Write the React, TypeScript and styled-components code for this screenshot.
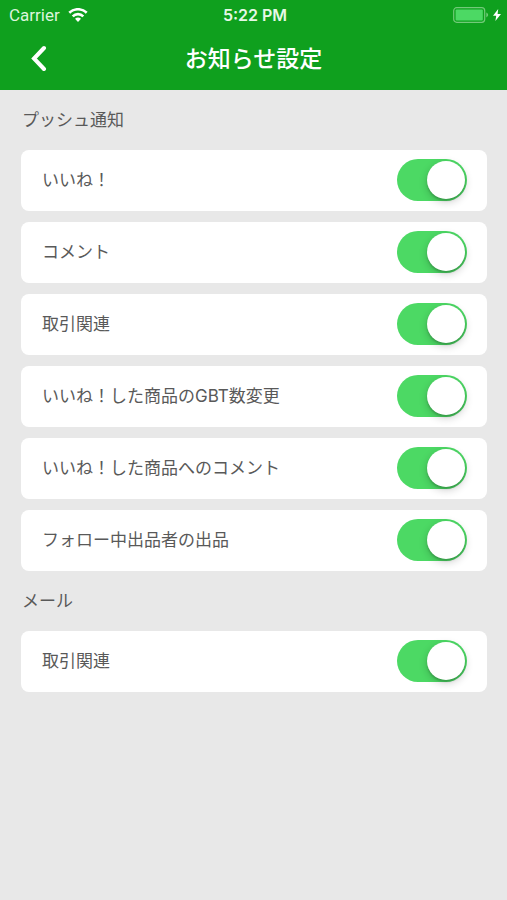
import React, { useState } from "react";
import styled, { createGlobalStyle } from "styled-components";

const GlobalStyle = createGlobalStyle`
  * { box-sizing: border-box; }
  body {
    margin: 0;
    background: #e8e8e8;
    color: #595959;
    font-family: "Inter", "Noto Sans CJK JP", sans-serif;
  }
`;

const Screen = styled.div`
  min-height: 100vh;
  background: #e8e8e8;
`;

const Header = styled.header`
  height: 90px;
  background: #0fa01e;
  color: #fff;
`;

const StatusBar = styled.div`
  display: grid;
  grid-template-columns: 1fr auto 1fr;
  align-items: center;
  height: 30px;
  padding: 0 6px 0 9px;
  font-size: 16px;
  line-height: 30px;
`;

const Carrier = styled.div`
  display: flex;
  align-items: center;
  gap: 8px;
  color: #dcf5dc;
  font-family: "Roboto", sans-serif;
  font-size: 17px;
`;

const Clock = styled.time`
  color: #e6f8e6;
  font-weight: 600;
`;

const Power = styled.div`
  display: flex;
  justify-content: flex-end;
  align-items: center;
  gap: 4px;
`;

const NavBar = styled.div`
  display: grid;
  grid-template-columns: 56px 1fr 56px;
  align-items: center;
  height: 56px;
`;

const BackButton = styled.button`
  display: flex;
  justify-content: flex-end;
  align-items: center;
  height: 44px;
  padding: 0 8px 0 0;
  border: 0;
  background: none;
  color: #fff;
  cursor: pointer;
`;

const Title = styled.h1`
  margin: 0;
  padding-bottom: 2px;
  text-align: center;
  font-family: "Noto Sans CJK JP", sans-serif;
  font-size: 23px;
  line-height: 32px;
  font-weight: 500;
`;

const Main = styled.main`
  padding: 0 20px 20px 21px;
`;

const SectionTitle = styled.h2`
  margin: 0;
  padding: 0 1px;
  font-size: 17px;
  line-height: 60px;
  font-weight: 400;
`;

const List = styled.ul`
  display: grid;
  gap: 11px;
  margin: 0;
  padding: 0;
  list-style: none;
`;

const Row = styled.label`
  display: flex;
  justify-content: space-between;
  align-items: center;
  height: 61px;
  padding: 0 20px 2px 21px;
  border-radius: 8px;
  background: #fff;
  font-size: 17px;
  line-height: 24px;
  cursor: pointer;
`;

const Switch = styled.input`
  appearance: none;
  flex: none;
  display: flex;
  align-items: center;
  width: 70px;
  height: 42px;
  margin: 0;
  padding: 0 2px;
  border-radius: 21px;
  background: #d5d5d5;
  cursor: pointer;

  &::before {
    content: "";
    width: 38px;
    height: 38px;
    border-radius: 50%;
    background: #fff;
    box-shadow: 0 3px 8px rgba(0, 0, 0, 0.2), 0 2px 2px rgba(0, 0, 0, 0.16);
  }

  &:checked {
    justify-content: flex-end;
    background: #4cd964;
  }
`;

const WifiIcon = () => (
  <svg width="20" height="15" viewBox="0 0 20 15" aria-label="Wi-Fi">
    <g fill="none" stroke="#fff" strokeWidth="2.6">
      <path d="M1.3 4.8a12.4 12.4 0 0 1 17.4 0" />
      <path d="M4.7 8.3a7.5 7.5 0 0 1 10.6 0" />
    </g>
    <path fill="#fff" d="M10 13.9l-3-3.1a4.4 4.4 0 0 1 6 0z" />
  </svg>
);

const BatteryIcon = () => (
  <svg width="36" height="16" viewBox="0 0 36 16" aria-label="Battery">
    <rect x="0.7" y="0.7" width="31" height="14.6" rx="3" fill="none" stroke="#72ca79" strokeWidth="1.2" />
    <rect x="2.6" y="2.6" width="27.2" height="10.8" rx="1" fill="#4cd964" />
    <path fill="#72ca79" d="M33.3 5.6c2.4.9 2.4 3.9 0 4.8z" />
  </svg>
);

const BoltIcon = () => (
  <svg width="8" height="12" viewBox="0 0 8 12" aria-label="Charging">
    <path fill="#fff" d="M5.2 0L0 6.8h3.2L2.4 12 8 4.9H4.6z" />
  </svg>
);

const ChevronIcon = () => (
  <svg width="18" height="26" viewBox="0 0 18 26" aria-hidden="true">
    <path
      d="M14 3L4 13.5 14 24"
      fill="none"
      stroke="currentColor"
      strokeWidth="4"
      strokeLinecap="round"
    />
  </svg>
);

const sections = [
  {
    title: "プッシュ通知",
    items: [
      "いいね！",
      "コメント",
      "取引関連",
      "いいね！した商品のGBT数変更",
      "いいね！した商品へのコメント",
      "フォロー中出品者の出品",
    ],
  },
  { title: "メール", items: ["取引関連"] },
];

const SettingRow = ({ label }: { label: string }) => {
  const [enabled, setEnabled] = useState(true);
  return (
    <li>
      <Row>
        <span>{label}</span>
        <Switch
          type="checkbox"
          role="switch"
          checked={enabled}
          onChange={(event) => setEnabled(event.target.checked)}
        />
      </Row>
    </li>
  );
};

export default function App() {
  return (
    <Screen lang="ja">
      <GlobalStyle />
      <Header>
        <StatusBar>
          <Carrier>
            Carrier
            <WifiIcon />
          </Carrier>
          <Clock>5:22 PM</Clock>
          <Power>
            <BatteryIcon />
            <BoltIcon />
          </Power>
        </StatusBar>
        <NavBar>
          <BackButton type="button" aria-label="戻る">
            <ChevronIcon />
          </BackButton>
          <Title>お知らせ設定</Title>
        </NavBar>
      </Header>
      <Main>
        {sections.map((section) => (
          <section key={section.title}>
            <SectionTitle>{section.title}</SectionTitle>
            <List>
              {section.items.map((item) => (
                <SettingRow key={item} label={item} />
              ))}
            </List>
          </section>
        ))}
      </Main>
    </Screen>
  );
}
